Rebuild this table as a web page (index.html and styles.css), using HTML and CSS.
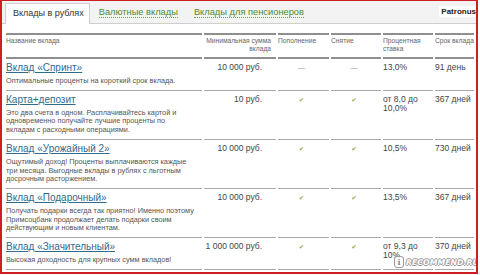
FILE: index.html
```html
<!DOCTYPE html>
<html lang="ru">
<head>
<meta charset="utf-8">
<link rel="stylesheet" href="styles.css">
</head>
<body>
<div class="frame">
  <div class="tabs">
    <span class="tab active">Вклады в рублях</span>
    <span class="tab"><span class="dotted">Валютные вклады</span></span>
    <span class="tab"><span class="dotted">Вклады для пенсионеров</span></span>
  </div>
  <table class="deposits">
    <colgroup>
      <col class="c-name"><col class="c-sum"><col class="c-add"><col class="c-out"><col class="c-rate"><col class="c-term">
    </colgroup>
    <thead>
      <tr>
        <th>Название вклада</th>
        <th class="r">Минимальная сумма вклада</th>
        <th>Пополнение</th>
        <th>Снятие</th>
        <th>Процентная ставка</th>
        <th class="nw">Срок вклада</th>
      </tr>
    </thead>
    <tbody>
      <tr>
        <td><div class="title"><a>Вклад «Спринт»</a></div><div class="desc">Оптимальные проценты на короткий срок вклада.</div></td>
        <td class="val sum">10 000 руб.</td>
        <td class="val c"><span class="dash">—</span></td>
        <td class="val c"><span class="dash">—</span></td>
        <td class="val">13,0%</td>
        <td class="val nw">91 день</td>
      </tr>
      <tr>
        <td><div class="title"><a>Карта+депозит</a></div><div class="desc">Это два счета в одном. Расплачивайтесь картой и<br>одновременно получайте лучшие проценты по<br>вкладам с расходными операциями.</div></td>
        <td class="val sum">10 руб.</td>
        <td class="val c"><span class="check">✔</span></td>
        <td class="val c"><span class="check">✔</span></td>
        <td class="val">от 8,0 до<br>10,0%</td>
        <td class="val nw">367 дней</td>
      </tr>
      <tr>
        <td><div class="title"><a>Вклад «Урожайный 2»</a></div><div class="desc">Ощутимый доход! Проценты выплачиваются каждые<br>три месяца. Выгодные вклады в рублях с льготным<br>досрочным расторжением.</div></td>
        <td class="val sum">10 000 руб.</td>
        <td class="val c"><span class="check">✔</span></td>
        <td class="val c"><span class="check">✔</span></td>
        <td class="val">10,5%</td>
        <td class="val nw">730 дней</td>
      </tr>
      <tr>
        <td><div class="title"><a>Вклад «Подарочный»</a></div><div class="desc">Получать подарки всегда так приятно! Именно поэтому<br>Примсоцбанк продолжает делать подарки своим<br>действующим и новым клиентам.</div></td>
        <td class="val sum">10 000 руб.</td>
        <td class="val c"><span class="check">✔</span></td>
        <td class="val c"><span class="check">✔</span></td>
        <td class="val">13,5%</td>
        <td class="val nw">367 дней</td>
      </tr>
      <tr>
        <td><div class="title"><a>Вклад «Значительный»</a></div><div class="desc">Высокая доходность для крупных сумм вкладов!</div></td>
        <td class="val sum">1 000 000 руб.</td>
        <td class="val c"><span class="check">✔</span></td>
        <td class="val c"><span class="check">✔</span></td>
        <td class="val">от 9,3 до<br>10%</td>
        <td class="val nw">370 дней</td>
      </tr>
    </tbody>
  </table>
  <div class="user">Patronus</div>
  <div class="watermark"><span class="wm-icon">i</span><span class="wm-text">RECOMMEND.RU</span></div>
</div>
</body>
</html>
```

FILE: styles.css
```css
html, body {
  margin: 0;
  padding: 0;
  background: #ffffff;
}
body {
  font-family: "Liberation Sans", Arial, sans-serif;
  color: #444;
}
.frame {
  position: relative;
  box-sizing: border-box;
  width: 478px;
  height: 274px;
  border: 2px solid #cf1f24;
  border-top-width: 1px;
  background: #fff;
  overflow: hidden;
}
.tabs {
  display: flex;
  align-items: flex-end;
  height: 22px;
  padding-left: 3px;
  background: #f3f3f3;
  border-bottom: 1px solid #cfcfcf;
}
.tab {
  font-size: 9.3px;
  line-height: 12px;
  padding: 0 8px 5px;
  color: #4f8d2f;
}
.tab.active {
  font-size: 9px;
  color: #333;
  background: #fff;
  border: 1px solid #cfcfcf;
  border-bottom: none;
  box-sizing: border-box;
  padding: 3px 5px 0 7px;
  margin-bottom: -1px;
  margin-right: 1px;
  height: 21px;
}
.dotted {
  border-bottom: 1px dotted #6da050;
}
.deposits {
  table-layout: fixed;
  border-collapse: separate;
  border-spacing: 2px 0;
  margin: 9px 0 0 2px;
  font-size: 7px;
  line-height: 8px;
}
.c-name { width: 196px; }
.c-sum { width: 72px; }
.c-add { width: 51px; }
.c-out { width: 50px; }
.c-rate { width: 50px; }
.c-term { width: 39px; }
th {
  font-weight: normal;
  font-size: 6.7px;
  line-height: 7.5px;
  color: #666;
  text-align: left;
  vertical-align: top;
  padding: 2px 0 5px;
  border-top: 2px solid #8f8f8f;
  border-bottom: 2px solid #8f8f8f;
}
th.r { text-align: right; padding-right: 5px; }
.nw { white-space: nowrap; }
td {
  vertical-align: top;
  padding: 2px 0 4px;
  border-bottom: 1px solid #a9a9a9;
}
.title {
  font-size: 10px;
  line-height: 14px;
  color: #2f6b8e;
}
.title a {
  text-decoration: underline;
  text-underline-offset: 1px;
}
.desc {
  margin-top: 2px;
  font-size: 7.3px;
  line-height: 8.7px;
  color: #555;
}
.val {
  font-size: 8.5px;
  line-height: 9px;
  padding-top: 4px;
  color: #444;
}
.val.sum { text-align: right; padding-right: 14px; }
.val.c { text-align: center; padding-right: 4px; }
.check {
  font-family: "DejaVu Sans", sans-serif;
  font-size: 6.5px;
  color: #94ad52;
}
.dash {
  font-size: 7px;
  color: #9a9a9a;
}
.user {
  position: absolute;
  top: 5px;
  right: 0;
  font-size: 8px;
  font-weight: bold;
  color: #222;
  background: #fff;
  padding: 1px 0 1px 2px;
}
.watermark {
  position: absolute;
  left: 392px;
  top: 255px;
  display: flex;
  align-items: center;
  gap: 2px;
}
.wm-icon {
  width: 8px;
  height: 10px;
  border-radius: 3px;
  background: rgba(255,255,255,0.8);
  border: 1px solid #9a9a9a;
  font-family: "DejaVu Serif", serif;
  font-weight: bold;
  font-size: 8px;
  line-height: 10px;
  text-align: center;
  color: #8a8a8a;
}
.wm-text {
  font-family: "DejaVu Sans", sans-serif;
  font-weight: bold;
  font-style: italic;
  font-size: 7.8px;
  color: #fff;
  text-shadow: 1px 0 0 #9a9a9a, -1px 0 0 #9a9a9a, 0 1px 0 #9a9a9a, 0 -1px 0 #9a9a9a;
}
```
